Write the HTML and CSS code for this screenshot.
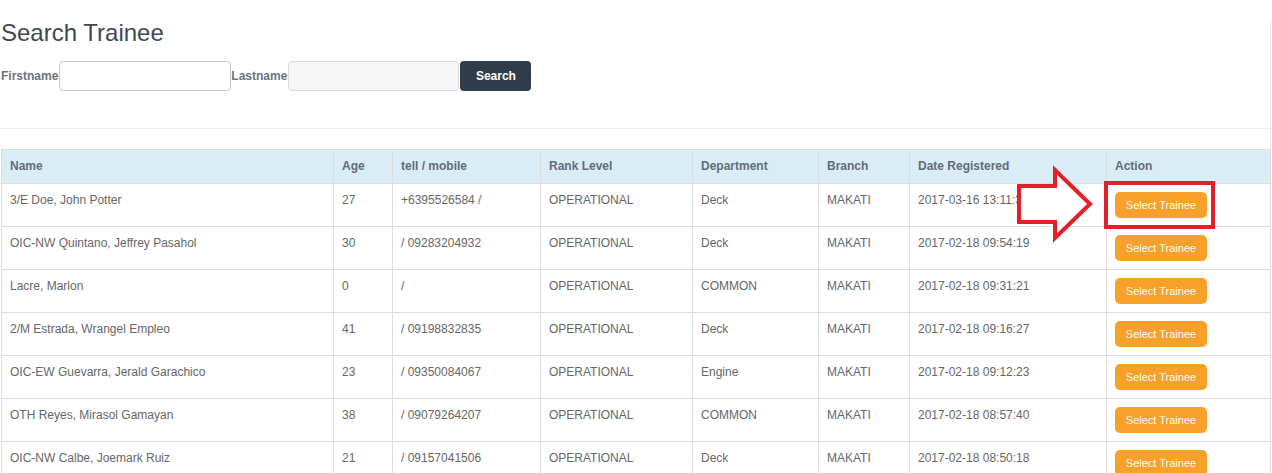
FILE: index.html
```html
<!DOCTYPE html>
<html>
<head>
<meta charset="utf-8">
<title>Search Trainee</title>
<link rel="stylesheet" href="styles.css">
</head>
<body>
<div class="page">
  <h3 class="title">Search Trainee</h3>
  <form class="search-form">
    <label class="lbl">Firstname</label>
    <input class="field" type="text">
    <label class="lbl">Lastname</label>
    <input class="field field-muted" type="text">
    <button class="btn-search" type="button">Search</button>
  </form>
  <div class="divider"></div>
  <table class="grid">
    <colgroup>
      <col class="c-name"><col class="c-age"><col class="c-tel"><col class="c-rank"><col class="c-dept"><col class="c-branch"><col class="c-date"><col class="c-action">
    </colgroup>
    <thead>
      <tr><th>Name</th><th>Age</th><th>tell / mobile</th><th>Rank Level</th><th>Department</th><th>Branch</th><th>Date Registered</th><th>Action</th></tr>
    </thead>
    <tbody>
      <tr><td>3/E Doe, John Potter</td><td>27</td><td>+6395526584 /</td><td>OPERATIONAL</td><td>Deck</td><td>MAKATI</td><td>2017-03-16 13:11:36</td><td><button class="btn-select" type="button">Select Trainee</button></td></tr>
      <tr><td>OIC-NW Quintano, Jeffrey Pasahol</td><td>30</td><td>/ 09283204932</td><td>OPERATIONAL</td><td>Deck</td><td>MAKATI</td><td>2017-02-18 09:54:19</td><td><button class="btn-select" type="button">Select Trainee</button></td></tr>
      <tr><td>Lacre, Marlon</td><td>0</td><td>/</td><td>OPERATIONAL</td><td>COMMON</td><td>MAKATI</td><td>2017-02-18 09:31:21</td><td><button class="btn-select" type="button">Select Trainee</button></td></tr>
      <tr><td>2/M Estrada, Wrangel Empleo</td><td>41</td><td>/ 09198832835</td><td>OPERATIONAL</td><td>Deck</td><td>MAKATI</td><td>2017-02-18 09:16:27</td><td><button class="btn-select" type="button">Select Trainee</button></td></tr>
      <tr><td>OIC-EW Guevarra, Jerald Garachico</td><td>23</td><td>/ 09350084067</td><td>OPERATIONAL</td><td>Engine</td><td>MAKATI</td><td>2017-02-18 09:12:23</td><td><button class="btn-select" type="button">Select Trainee</button></td></tr>
      <tr><td>OTH Reyes, Mirasol Gamayan</td><td>38</td><td>/ 09079264207</td><td>OPERATIONAL</td><td>COMMON</td><td>MAKATI</td><td>2017-02-18 08:57:40</td><td><button class="btn-select" type="button">Select Trainee</button></td></tr>
      <tr><td>OIC-NW Calbe, Joemark Ruiz</td><td>21</td><td>/ 09157041506</td><td>OPERATIONAL</td><td>Deck</td><td>MAKATI</td><td>2017-02-18 08:50:18</td><td><button class="btn-select" type="button">Select Trainee</button></td></tr>
    </tbody>
  </table>
</div>
<svg class="anno-arrow" width="90" height="90" viewBox="0 0 90 90">
  <polygon points="9,26 45,26 45,10 80,44 45,78 45,62 9,62" fill="#ffffff" stroke="#e3202a" stroke-width="4" stroke-linejoin="miter"/>
</svg>
<div class="anno-box"></div>
</body>
</html>
```
FILE: styles.css
```css
html, body {
  margin: 0;
  padding: 0;
  background: #ffffff;
}
body {
  position: relative;
  font-family: "Liberation Sans", Arial, sans-serif;
  font-size: 12px;
  color: #666;
  overflow: hidden;
}
.page {
  width: 1269px;
  padding-left: 1px;
  border-right: 1px solid #ececec;
  min-height: 473px;
}
.title {
  margin: 20px 0 15px 0;
  font-size: 24px;
  font-weight: normal;
  line-height: 26px;
  color: #3e4852;
}
.search-form {
  display: flex;
  align-items: center;
  height: 30px;
  margin: 0;
}
.lbl {
  font-weight: bold;
  font-size: 12px;
  color: #6b737d;
}
.field {
  box-sizing: border-box;
  width: 172px;
  height: 30px;
  margin: 0 0 0 1px;
  padding: 4px 8px;
  border: 1px solid #c8c8c8;
  border-radius: 4px;
  background: #fff;
  font-family: inherit;
  font-size: 12px;
}
.field-muted {
  width: 171px;
  border-color: #dcdcdc;
  background: #f6f6f6;
}
.btn-search {
  box-sizing: border-box;
  width: 71px;
  height: 30px;
  margin-left: 1px;
  border: none;
  border-radius: 4px;
  background: #2f3d4b;
  color: #ffffff;
  font-family: inherit;
  font-size: 12px;
  font-weight: bold;
}
.divider {
  margin-top: 37px;
  height: 1px;
  background: #ececec;
}
.grid {
  margin-top: 20px;
  width: 1269px;
  border-collapse: collapse;
  table-layout: fixed;
  border: 1px solid #dddddd;
}
.c-name { width: 332px; }
.c-age { width: 59px; }
.c-tel { width: 148px; }
.c-rank { width: 152px; }
.c-dept { width: 126px; }
.c-branch { width: 91px; }
.c-date { width: 197px; }
.c-action { width: 164px; }
.grid th, .grid td {
  border: 1px solid #dddddd;
  padding: 8px;
  text-align: left;
  vertical-align: top;
  line-height: 17px;
  font-size: 12px;
  white-space: nowrap;
  overflow: hidden;
}
.grid th {
  background: #d9edf7;
  color: #636c76;
  font-weight: bold;
  height: 17px;
}
.grid td {
  color: #666666;
  height: 26px;
}
.btn-select {
  display: block;
  box-sizing: border-box;
  width: 92px;
  height: 26px;
  margin: 0;
  border: none;
  border-radius: 5px;
  background: #f8a12a;
  color: #fffaf2;
  font-family: inherit;
  font-size: 11px;
  padding: 0;
}
.anno-arrow {
  position: absolute;
  left: 1010px;
  top: 160px;
}
.anno-box {
  position: absolute;
  left: 1104px;
  top: 181px;
  width: 111px;
  height: 48px;
  box-sizing: border-box;
  border: 4px solid #e3202a;
}
```
